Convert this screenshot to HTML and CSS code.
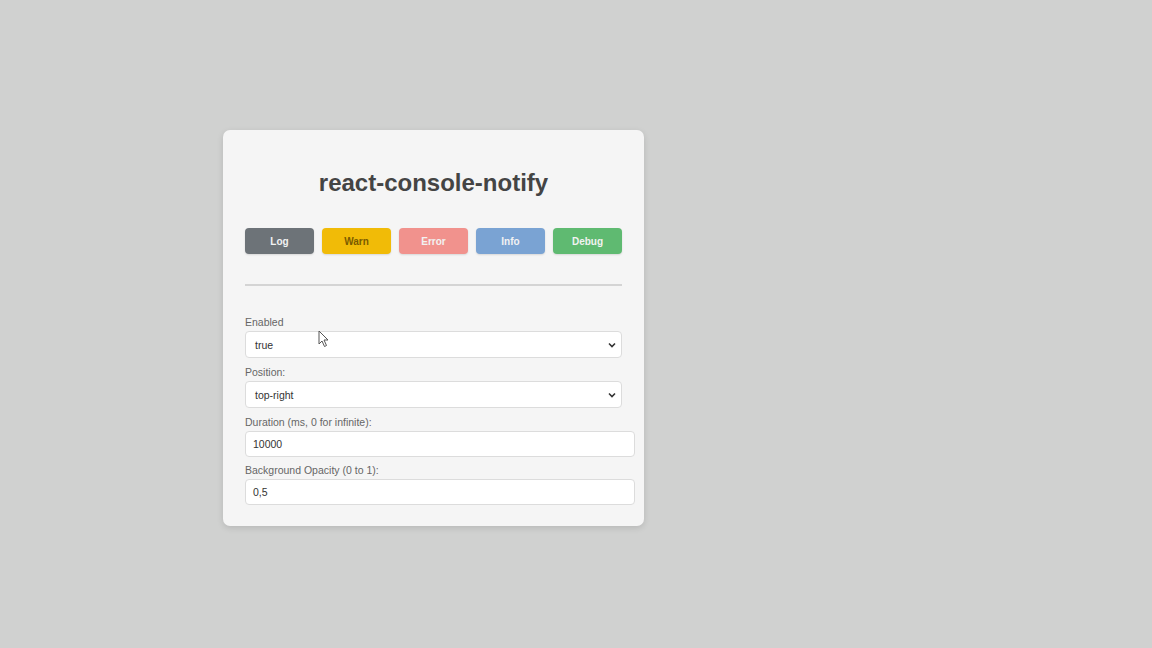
FILE: index.html
```html
<!DOCTYPE html>
<html>
<head>
<meta charset="utf-8">
<link rel="stylesheet" href="styles.css">
</head>
<body>
<div class="page">
  <div class="card">
    <h1 class="title">react-console-notify</h1>
    <div class="buttons">
      <button class="btn btn-log">Log</button>
      <button class="btn btn-warn">Warn</button>
      <button class="btn btn-error">Error</button>
      <button class="btn btn-info">Info</button>
      <button class="btn btn-debug">Debug</button>
    </div>
    <hr class="divider">
    <div class="form">
      <label class="label">Enabled</label>
      <div class="select">true<svg class="chev" width="8" height="6" viewBox="0 0 8 6"><path d="M1 1.5 L4 4.5 L7 1.5" fill="none" stroke="#333" stroke-width="1.6"/></svg></div>
      <label class="label">Position:</label>
      <div class="select">top-right<svg class="chev" width="8" height="6" viewBox="0 0 8 6"><path d="M1 1.5 L4 4.5 L7 1.5" fill="none" stroke="#333" stroke-width="1.6"/></svg></div>
      <label class="label">Duration (ms, 0 for infinite):</label>
      <div class="input">10000</div>
      <label class="label">Background Opacity (0 to 1):</label>
      <div class="input">0,5</div>
    </div>
    <svg class="cursor" width="12" height="18" viewBox="0 0 12 18"><path d="M1 1 L1 14 L4 11 L6.5 16.5 L8.5 15.5 L6 10 L10 10 Z" fill="#fff" stroke="#555" stroke-width="1"/></svg>
  </div>
</div>
</body>
</html>
```

FILE: styles.css
```css
html, body {
  margin: 0;
  padding: 0;
  height: 100%;
}
body {
  background: #d0d1d0;
  font-family: "Liberation Sans", Arial, sans-serif;
}
.page {
  padding-top: 130px;
  padding-left: 223px;
}
.card {
  position: relative;
  width: 377px;
  padding: 22px 22px 22px 22px;
  background: #f5f5f5;
  border-radius: 7px;
  box-shadow: 0 2px 6px rgba(0,0,0,0.12);
  height: 352px;
}
.title {
  margin: 17px 0 0 0;
  text-align: center;
  font-size: 24px;
  font-weight: bold;
  color: #444;
  line-height: 28px;
}
.buttons {
  display: flex;
  gap: 8px;
  margin-top: 31px;
}
.btn {
  flex: 1;
  height: 26px;
  border: none;
  border-radius: 4px;
  font-family: "Liberation Sans", Arial, sans-serif;
  font-size: 10px;
  font-weight: bold;
  color: #f2f2f2;
  box-shadow: 0 1px 2px rgba(0,0,0,0.12);
  padding: 0;
}
.btn-log { background: #6d7378; }
.btn-warn { background: #f1bb07; color: #7a5c00; }
.btn-error { background: #f1928d; }
.btn-info { background: #7aa3d3; }
.btn-debug { background: #5fba71; }
.divider {
  margin: 30px 0 0 0;
  border: none;
  border-top: 2px solid #d4d4d4;
  height: 0;
}
.form {
  display: flex;
  flex-direction: column;
  margin-top: 30px;
}
.label {
  font-size: 10.5px;
  color: #666;
  line-height: 12px;
  margin-bottom: 3px;
}
.select {
  position: relative;
  box-sizing: border-box;
  height: 27px;
  width: 377px;
  border: 1px solid #dcdcdc;
  border-radius: 4px;
  background: #fff;
  font-size: 10.5px;
  color: #333;
  padding: 0 9px;
  display: flex;
  align-items: center;
  justify-content: space-between;
  margin-bottom: 8px;
}
.input {
  box-sizing: border-box;
  height: 26px;
  width: 390px;
  border: 1px solid #dcdcdc;
  border-radius: 4px;
  background: #fff;
  font-size: 10.5px;
  color: #333;
  padding: 0 7px;
  display: flex;
  align-items: center;
  margin-bottom: 7px;
}
.chev {
  margin-right: -4px;
}
.cursor {
  position: absolute;
  left: 95px;
  top: 200px;
}
```
